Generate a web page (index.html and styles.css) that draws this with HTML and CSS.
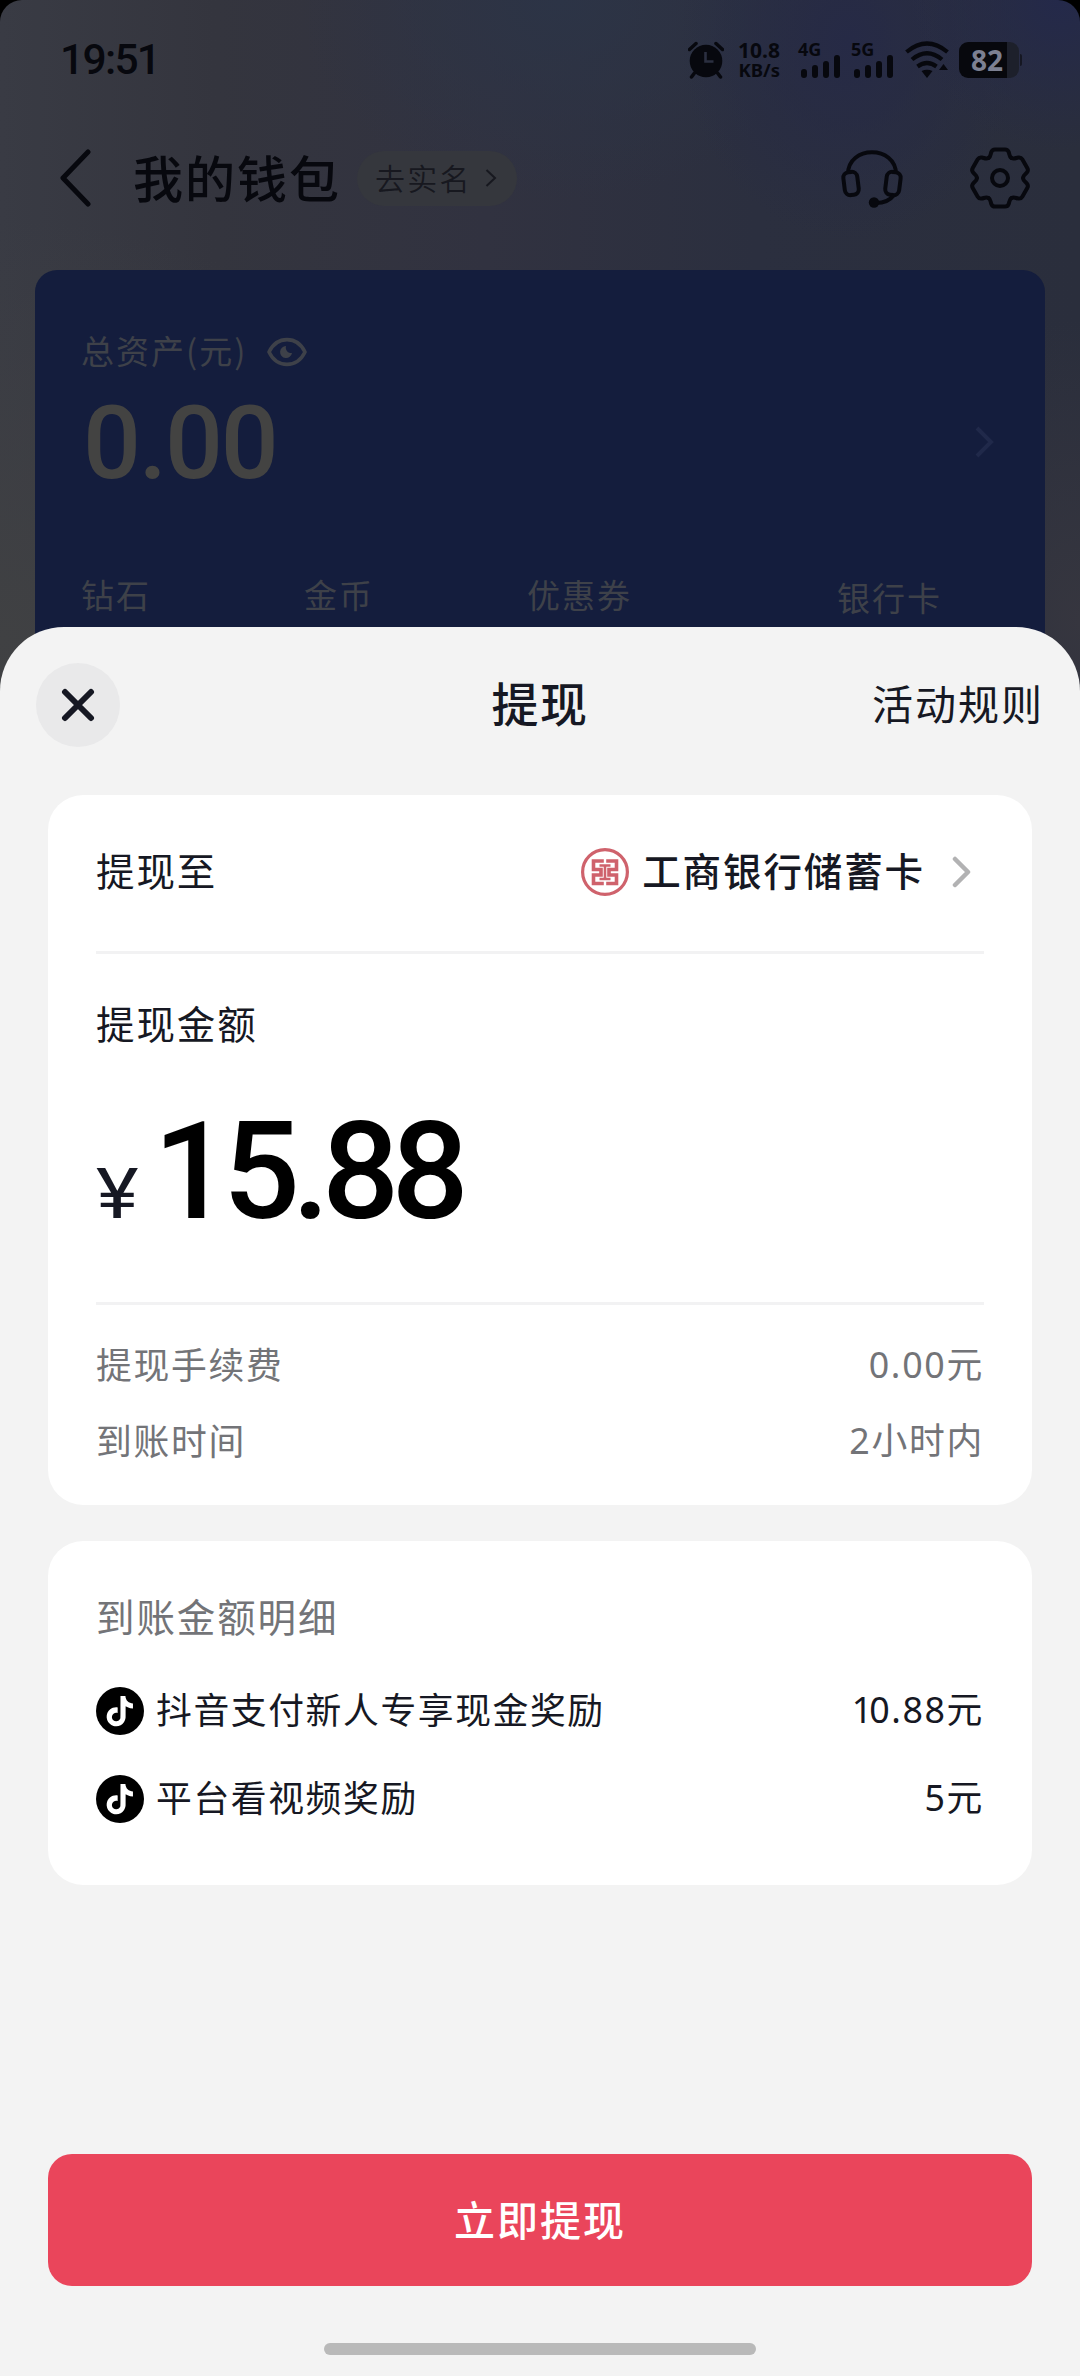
FILE: index.html
```html
<!DOCTYPE html>
<html lang="zh-CN">
<head>
<meta charset="utf-8">
<title>提现</title>
<link rel="stylesheet" href="styles.css">
</head>
<body>
<div class="screen">
  <section class="wallet">
    <div class="status">
      <span class="clock">19:51</span>
      <div class="status-icons">
        <svg class="alarm" width="36" height="38" viewBox="0 0 36 38">
          <circle cx="18" cy="20" r="16.3" fill="currentColor"/>
          <path d="M1.500 8.500L8 2.500M34.500 8.500L28 2.500M6.500 32L3.500 36M29.500 32L32.500 36" fill="none" stroke="currentColor" stroke-width="3.500" stroke-linecap="round"/>
          <path d="M17.500 11V20.500H25.500" fill="none" stroke="#2b2f40" stroke-width="2.600"/>
        </svg>
        <div class="speed"><span>10.8</span><span class="unit">KB/s</span></div>
        <div class="cell">
          <span class="net">4G</span>
          <svg width="42" height="26" viewBox="0 0 42 26"><path d="M5 19V22M16 15V22M27 11V22M38 5V22" stroke="currentColor" stroke-width="6" stroke-linecap="round"/></svg>
        </div>
        <div class="cell second">
          <span class="net">5G</span>
          <svg width="42" height="26" viewBox="0 0 42 26"><path d="M5 19V22M16 15V22M27 11V22M38 5V22" stroke="currentColor" stroke-width="6" stroke-linecap="round"/></svg>
        </div>
        <svg class="wifi" width="44" height="38" viewBox="0 0 44 38">
          <path d="M1.500 11Q22 -6 42.500 11M7 18.500Q22 6 37 18.500M12.500 25.500Q22 18.500 31.500 25.500" fill="none" stroke="currentColor" stroke-width="4.200"/>
          <path d="M16.500 30Q22 27.500 27.500 30L22 37Z" fill="currentColor"/>
          <path d="M34 29L38.500 23L43 29Z" fill="currentColor"/>
        </svg>
        <div class="battery"><span class="level">82</span></div>
        <div class="battery-tip"></div>
      </div>
    </div>

    <header class="nav">
      <svg class="back" width="32" height="58" viewBox="0 0 32 58"><path d="M29 3L4 29L29 55" fill="none" stroke="currentColor" stroke-width="5" stroke-linecap="round" stroke-linejoin="round"/></svg>
      <h1>我的钱包</h1>
      <div class="verify"><span>去实名</span><svg width="12" height="20" viewBox="0 0 12 20"><path d="M1.500 2L10 10L1.500 18" fill="none" stroke="currentColor" stroke-width="2"/></svg></div>
      <svg class="headset" width="64" height="64" viewBox="0 0 64 64">
        <g fill="none" stroke="currentColor" stroke-width="4">
          <path d="M8 28C8 -1 56 -1 56 28"/>
          <rect x="4" y="26" width="14" height="23" rx="5.500" transform="rotate(-7 11 37)"/>
          <rect x="46" y="26" width="14" height="23" rx="5.500" transform="rotate(7 53 37)"/>
          <path d="M54 49Q48 57 36 57"/>
        </g>
        <circle cx="34" cy="56.500" r="5.200" fill="currentColor"/>
      </svg>
      <svg class="gear" width="64" height="64" viewBox="-32 -32 64 64">
        <defs><path id="lobe" d="M-11.500 -20C-9 -21.500 -9.500 -24 -8.700 -26Q-7.700 -28.600 -5 -28.600H5Q7.700 -28.600 8.700 -26C9.500 -24 9 -21.500 11.500 -20"/></defs>
        <g fill="none" stroke="currentColor" stroke-width="4" stroke-linecap="round">
          <use href="#lobe"/><use href="#lobe" transform="rotate(60)"/><use href="#lobe" transform="rotate(120)"/>
          <use href="#lobe" transform="rotate(180)"/><use href="#lobe" transform="rotate(240)"/><use href="#lobe" transform="rotate(300)"/>
          <circle r="8"/>
        </g>
      </svg>
    </header>

    <div class="assets">
      <div class="assets-label"><span>总资产(元)</span>
        <svg width="40" height="30" viewBox="0 0 40 30"><path d="M2 15C10 -1.500 30 -1.500 38 15C30 31.500 10 31.500 2 15Z" fill="none" stroke="currentColor" stroke-width="3.600" stroke-linejoin="round"/><path d="M19 9A6 6 0 1 0 25 16A5.500 5.500 0 0 1 19 9Z" fill="currentColor"/></svg>
      </div>
      <div class="assets-total"><span>0.00</span>
        <svg width="20" height="32" viewBox="0 0 20 32"><path d="M3 2L17 16L3 30" fill="none" stroke="#20294a" stroke-width="4"/></svg>
      </div>
      <div class="assets-tabs"><span>钻石</span><span>金币</span><span>优惠券</span><span class="bank-tab">银行卡</span></div>
    </div>
  </section>

  <main class="sheet">
    <div class="sheet-head">
      <div class="close"><svg width="34" height="34" viewBox="0 0 34 34"><path d="M4 4L30 30M30 4L4 30" stroke="#161823" stroke-width="6" stroke-linecap="round"/></svg></div>
      <h2>提现</h2>
      <span class="rules">活动规则</span>
    </div>

    <section class="card">
      <div class="target">
        <span>提现至</span>
        <div class="bank">
          <svg class="logo" width="48" height="48" viewBox="0 0 48 48" fill="none" stroke="#cf626c">
            <circle cx="24" cy="24" r="22.400" stroke-width="3.200"/>
            <path d="M22.800 13H12.500V21.500H20V27H12.500V35.500H22.800M25.200 13H35.500V21.500H28V27H35.500V35.500H25.200" stroke-width="3.600"/>
            <path d="M18.500 17.500H29.500M18.500 31H29.500M24 17V31" stroke-width="2.600"/>
          </svg>
          <span>工商银行储蓄卡</span>
          <svg class="more" width="20" height="32" viewBox="0 0 20 32"><path d="M3 3L16 16L3 29" fill="none" stroke="#b2b2b3" stroke-width="4.500" stroke-linecap="round" stroke-linejoin="round"/></svg>
        </div>
      </div>
      <div class="amount">
        <div class="amount-label">提现金额</div>
        <div class="amount-value"><span class="yen">¥</span><span class="digits">15.88</span></div>
      </div>
      <div class="facts">
        <div class="fact"><span>提现手续费</span><span class="num">0.00元</span></div>
        <div class="fact"><span>到账时间</span><span class="num">2小时内</span></div>
      </div>
    </section>

    <section class="card details">
      <div class="details-title">到账金额明细</div>
      <div class="detail">
        <svg width="48" height="48" viewBox="0 0 48 48"><circle cx="24" cy="24" r="24"/><path id="note" fill="#fff" transform="translate(8.700 9) scale(1.260)" d="M12.525.02c1.31-.02 2.61-.01 3.91-.02.08 1.530.63 3.090 1.750 4.170 1.120 1.110 2.700 1.620 4.240 1.790v4.030c-1.440-.05-2.890-.35-4.200-.97-.57-.26-1.100-.59-1.620-.93-.01 2.920.01 5.840-.02 8.750-.08 1.400-.54 2.790-1.350 3.940-1.310 1.920-3.580 3.170-5.910 3.210-1.430.08-2.860-.31-4.080-1.030-2.020-1.190-3.440-3.370-3.650-5.710-.02-.5-.03-1-.01-1.490.18-1.900 1.120-3.720 2.580-4.960 1.660-1.440 3.980-2.130 6.150-1.720.02 1.480-.04 2.960-.04 4.440-.99-.32-2.150-.23-3.020.37-.63.41-1.110 1.040-1.360 1.750-.21.51-.15 1.070-.14 1.610.24 1.640 1.820 3.020 3.500 2.870 1.120-.01 2.190-.66 2.770-1.610.19-.33.4-.67.41-1.060.1-1.790.06-3.570.07-5.360.01-4.030-.01-8.050.02-12.070z"/></svg>
        <span>抖音支付新人专享现金奖励</span><span class="num"><span class="narrow">1</span>0.88元</span>
      </div>
      <div class="detail">
        <svg width="48" height="48" viewBox="0 0 48 48"><circle cx="24" cy="24" r="24"/><use href="#note"/></svg>
        <span>平台看视频奖励</span><span class="num">5元</span>
      </div>
    </section>

    <button class="submit">立即提现</button>
    <div class="home-bar"></div>
  </main>
</div>
</body>
</html>
```
FILE: styles.css
```css
* { box-sizing: border-box; }
body { margin: 0; background: #000; font-family: "Noto Sans CJK SC", sans-serif; color: #161823; }
h1, h2 { margin: 0; font-weight: 500; }
svg { display: block; flex: none; }
span { white-space: nowrap; }

.screen {
  width: 1080px; height: 2376px; overflow: hidden;
  display: flex; flex-direction: column;
  border-radius: 22px 22px 0 0;
  background:
    radial-gradient(circle 150px at 1060px 0, #24294a 0, #24294a00 100%),
    radial-gradient(ellipse 170px 200px at 850px 40px, #262a46 0, #262a4600 100%),
    radial-gradient(ellipse 260px 200px at 560px 0, #2c3446 0, #2c344600 100%),
    radial-gradient(ellipse 500px 420px at 0 640px, #404143 0, #40414300 100%),
    radial-gradient(ellipse 200px 300px at 1080px 620px, #36363f 0, #36363f00 100%),
    linear-gradient(90deg, #393b44 0, #34353e 20%, #313240 45%, #2b2f3f 70%, #2a2e3c 100%);
}

/* dimmed wallet page */
.wallet { height: 700px; flex: none; display: flex; flex-direction: column; color: #07080e; }
.status { height: 120px; padding: 0 58px 0 60px; display: flex; justify-content: space-between; align-items: center; }
.clock { font: 500 42.500px/60px Roboto, sans-serif; letter-spacing: -1.700px; }
.status-icons { display: flex; align-items: center; }
.speed { display: flex; flex-direction: column; align-items: flex-end; margin: -2px 3px 0 9px; width: 47px; font: 700 21px/22px "Noto Sans", sans-serif; }
.speed .unit { font-size: 18.500px; line-height: 18px; }
.cell { margin-left: 16px; width: 42px; height: 40px; display: flex; flex-direction: column; }
.cell svg { margin-top: -6px; }
.cell.second { margin-left: 11px; }
.net { font: 700 18px/20px "Noto Sans", sans-serif; margin: -1px 0 0 -1px; }
.wifi { margin-left: 11px; }
.battery { margin-left: 10px; width: 60px; height: 36px; border-radius: 9px; background: linear-gradient(90deg, #07080d 48px, #1d202b 48px); padding-left: 12px; }
.battery-tip { width: 2px; height: 12px; margin-left: 1px; border-radius: 0 2px 2px 0; background: #151722; }
.level { display: block; font: 700 28px/36px "Noto Sans", sans-serif; color: #7c8092; }

.nav { height: 116px; padding: 0 48px 0 59px; display: flex; align-items: center; }
.nav h1 { margin: -5px 0 0 42px; font-size: 50px; line-height: 60px; letter-spacing: 2px; }
.verify { margin-left: 16px; width: 160px; height: 55px; border-radius: 28px; padding-left: 18px; display: flex; align-items: center; gap: 13px; background: #35373d; color: #17181f; font-size: 30px; line-height: 40px; letter-spacing: 2.300px; font-weight: 350; }
.verify span { margin-top: -3px; }
.headset { margin-left: auto; }
.gear { margin-left: 64px; }

.assets { margin: 34px 35px 0; flex: 1; padding: 54px 51px 0 46px; background: #141d3d; border-radius: 22px 22px 0 0; color: #3e4149; font-size: 33px; letter-spacing: 2px; }
.assets-label { display: flex; align-items: center; height: 56px; gap: 20px; }
.assets-label span { line-height: 50px; margin-top: -4px; }
.assets-total { display: flex; align-items: center; justify-content: space-between; height: 124px; }
.assets-total span { font: 500 102px/120px Roboto, sans-serif; letter-spacing: -2.200px; margin: 2px 0 0 2px; color: #434342; }
.assets-tabs { display: flex; align-items: flex-start; margin-top: 65px; line-height: 50px; }
.assets-tabs span { width: 223px; }
.assets-tabs .bank-tab { margin: 3px 0 0 87px; width: auto; }

/* withdrawal sheet */
.sheet { flex: 1; margin-top: -73px; padding: 0 48px 21px; display: flex; flex-direction: column; background: #f3f3f3; border-radius: 64px 64px 0 0; }
.sheet-head { height: 168px; margin: 0 -12px; padding-bottom: 12px; display: grid; grid-template-columns: 1fr auto 1fr; align-items: center; }
.close { width: 84px; height: 84px; border-radius: 50%; background: #e9e9ea; display: grid; place-items: center; }
.sheet-head h2 { font-size: 47px; line-height: 60px; letter-spacing: 1.500px; margin-top: -6px; }
.rules { justify-self: end; font-size: 41px; line-height: 60px; letter-spacing: 2px; margin: -6px 0 0; }

.card { background: #fff; border-radius: 35px; padding: 0 48px; height: 710px; display: flex; flex-direction: column; flex: none; }
.target { height: 159px; padding-bottom: 6px; border-bottom: 3px solid #f2f2f3; display: flex; align-items: center; justify-content: space-between; font-size: 38.500px; line-height: 56px; letter-spacing: 1.900px; }
.target > span { margin-top: -3px; }
.bank { display: flex; align-items: center; font-weight: 500; }
.bank span { margin: -3px 27px 0 13px; }
.logo { margin-top: 3px; }
.more { margin: 3px 12px 0 0; }
.amount { height: 351px; border-bottom: 3px solid #f2f2f3; padding-top: 40px; }
.amount-label { font-size: 38.500px; line-height: 56px; letter-spacing: 1.900px; }
.amount-value { display: flex; align-items: baseline; margin-top: 47px; line-height: 150px; }
.yen { font: 400 71px/100px Roboto, sans-serif; transform: scaleX(1.14); transform-origin: left; }
.digits { font: 500 136px/150px Roboto, sans-serif; letter-spacing: -7.900px; color: #000; margin-left: 20px; }
.facts { padding-top: 21px; color: #737478; }
.fact { height: 76px; display: flex; align-items: center; justify-content: space-between; font-size: 35.800px; line-height: 52px; letter-spacing: 1.700px; }
.fact > span:first-child { margin-top: -2px; }
.num { font-family: "Noto Sans", "Noto Sans CJK SC", sans-serif; }
.narrow { letter-spacing: -3px; }

.details { margin-top: 36px; height: 344px; padding-top: 46px; }
.details-title { color: #737478; font-size: 38.500px; line-height: 56px; letter-spacing: 1.900px; margin-bottom: 24px; }
.detail { height: 88px; display: flex; align-items: center; font-size: 35.800px; line-height: 52px; letter-spacing: 1.600px; }
.detail > span { margin-top: -7px; }
.detail svg { margin-right: 12px; }
.detail .num { margin: -5px 0 0 auto; }

.submit { margin-top: auto; height: 132px; flex: none; border: 0; border-radius: 24px; background: #ea455b; color: #fff; font: 500 41px/60px "Noto Sans CJK SC", sans-serif; letter-spacing: 2px; padding: 0 0 5px; }
.home-bar { width: 432px; height: 12px; border-radius: 6px; background: #b9b9b9; margin: 57px auto 0; flex: none; }
```
